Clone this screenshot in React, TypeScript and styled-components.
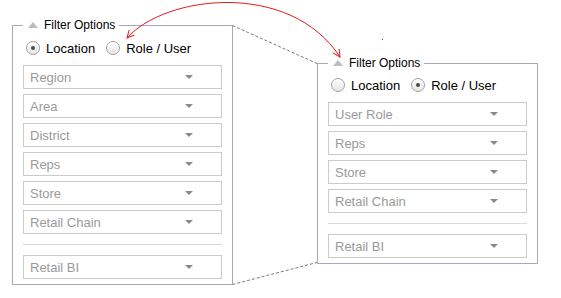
import React from "react";
import styled, { createGlobalStyle } from "styled-components";

const GlobalStyle = createGlobalStyle`
  html, body { margin: 0; padding: 0; background: #ffffff; }
  body { font-family: "Liberation Sans", Arial, Helvetica, sans-serif; }
  * { box-sizing: border-box; }
`;

const Canvas = styled.div`
  position: relative;
  width: 561px;
  height: 298px;
  overflow: hidden;
  background: #ffffff;
`;

const Row = styled.div`
  display: flex;
  align-items: flex-start;
  padding: 18px 0 0 12px;
`;

const Panel = styled.fieldset<{ $offsetX?: number; $offsetY?: number; $padTop?: number }>`
  width: 221px;
  min-width: 0;
  margin: ${(p) => p.$offsetY ?? 0}px 0 0 ${(p) => p.$offsetX ?? 0}px;
  padding: ${(p) => p.$padTop ?? 5}px 10px 5px 10px;
  border: 1px solid #a9a9bb;
  display: flex;
  flex-direction: column;
  gap: 5px;
`;

const Legend = styled.legend`
  display: flex;
  align-items: center;
  height: 15px;
  line-height: 15px;
  padding: 0 4px 0 5px;
  font-size: 12px;
  color: #000;
`;

const LegendArrow = styled.span`
  width: 0;
  height: 0;
  border-left: 5px solid transparent;
  border-right: 5px solid transparent;
  border-bottom: 6px solid #bdbdbd;
  margin-right: 6px;
  margin-top: -1px;
`;

const RadioRow = styled.div`
  display: flex;
  align-items: center;
  height: 20px;
  margin-bottom: 2px;
  padding-left: 3px;
  gap: 11px;
`;

const RadioLabel = styled.label`
  display: flex;
  align-items: center;
  gap: 6px;
  font-size: 13px;
  color: #000;
`;

const RadioCircle = styled.span<{ $checked?: boolean }>`
  position: relative;
  width: 14px;
  height: 14px;
  border-radius: 50%;
  border: 1px solid #a2a2a2;
  background: linear-gradient(#ffffff, #e6e6e6);
  box-shadow: inset 0 1px 1px rgba(255, 255, 255, 0.9);
  &::after {
    content: "";
    display: ${(p) => (p.$checked ? "block" : "none")};
    position: absolute;
    left: 4px;
    top: 4px;
    width: 4px;
    height: 4px;
    border-radius: 50%;
    background: #4a4a4a;
  }
`;

const Select = styled.div`
  display: flex;
  align-items: center;
  justify-content: space-between;
  height: 24px;
  border: 1px solid #cbcbcb;
  padding: 0 28px 0 6px;
  font-size: 13px;
  color: #9a9a9a;
`;

const Caret = styled.span`
  width: 0;
  height: 0;
  border-left: 4px solid transparent;
  border-right: 4px solid transparent;
  border-top: 4px solid #8a8a8a;
`;

const Separator = styled.div`
  height: 1px;
  background: #dadada;
  margin: 5px 0;
`;

const Overlay = styled.svg`
  position: absolute;
  left: 0;
  top: 0;
  pointer-events: none;
`;

type FilterProps = {
  selected: "location" | "role";
  fields: string[];
  extra: string;
  offsetX?: number;
  offsetY?: number;
  padTop?: number;
};

function FilterPanel({ selected, fields, extra, offsetX, offsetY, padTop }: FilterProps) {
  return (
    <Panel $offsetX={offsetX} $offsetY={offsetY} $padTop={padTop}>
      <Legend>
        <LegendArrow />
        Filter Options
      </Legend>
      <RadioRow>
        <RadioLabel>
          <RadioCircle $checked={selected === "location"} />
          Location
        </RadioLabel>
        <RadioLabel>
          <RadioCircle $checked={selected === "role"} />
          Role / User
        </RadioLabel>
      </RadioRow>
      {fields.map((f) => (
        <Select key={f}>
          {f}
          <Caret />
        </Select>
      ))}
      <Separator />
      <Select>
        {extra}
        <Caret />
      </Select>
    </Panel>
  );
}

export default function App() {
  return (
    <>
      <GlobalStyle />
      <Canvas>
        <Row>
          <FilterPanel
            selected="location"
            fields={["Region", "Area", "District", "Reps", "Store", "Retail Chain"]}
            extra="Retail BI"
          />
          <FilterPanel
            selected="role"
            fields={["User Role", "Reps", "Store", "Retail Chain"]}
            extra="Retail BI"
            offsetX={84}
            offsetY={38}
            padTop={4}
          />
        </Row>
        <Overlay width={561} height={298} viewBox="0 0 561 298">
          <defs>
            <marker
              id="arrow"
              viewBox="0 0 10 10"
              refX="9"
              refY="5"
              markerWidth="9"
              markerHeight="9"
              markerUnits="userSpaceOnUse"
              orient="auto-start-reverse"
            >
              <path d="M1,1 L9,5 L1,9" fill="none" stroke="#e41a1a" strokeWidth="1.1" />
            </marker>
          </defs>
          <g stroke="#7a7a7a" strokeWidth="1" strokeDasharray="3 2" fill="none">
            <line x1="232.5" y1="25.5" x2="317" y2="63.5" />
            <line x1="232.5" y1="284.5" x2="317" y2="262.5" />
          </g>
          <path
            d="M127,38 C165,-5 290,-20 340,57"
            fill="none"
            stroke="#e41a1a"
            strokeWidth="1"
            markerStart="url(#arrow)"
            markerEnd="url(#arrow)"
          />
          <rect x="382" y="39" width="1" height="1" fill="#e41a1a" />
        </Overlay>
      </Canvas>
    </>
  );
}
